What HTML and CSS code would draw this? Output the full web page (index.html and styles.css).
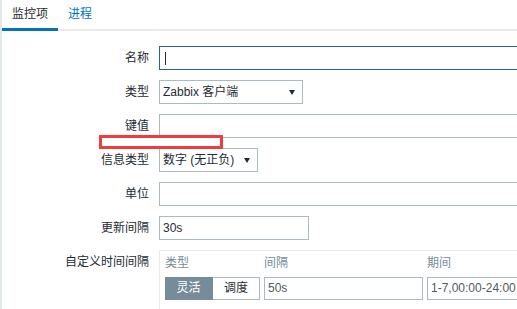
FILE: index.html
```html
<!DOCTYPE html>
<html lang="zh">
<head>
  <meta charset="UTF-8" />
  <title>监控项</title>
  <link rel="stylesheet" href="styles.css">
</head>
<body>
  <ul class="tabs">
    <li class="tab active">监控项</li>
    <li class="tab">进程</li>
  </ul>
  <div class="form">
    <div class="lbl">名称</div>
    <div class="field"><div class="box w-long focus"><span class="caret"></span></div></div>

    <div class="lbl">类型</div>
    <div class="field"><div class="box select w-type"><span>Zabbix 客户端</span><span class="arrow"></span></div></div>

    <div class="lbl">键值</div>
    <div class="field"><div class="box w-long"></div></div>

    <div class="lbl">信息类型</div>
    <div class="field"><div class="box select w-info"><span>数字 (无正负)</span><span class="arrow"></span></div></div>

    <div class="lbl">单位</div>
    <div class="field"><div class="box w-long"></div></div>

    <div class="lbl">更新间隔</div>
    <div class="field"><div class="box w-short">30s</div></div>

    <div class="lbl">自定义时间间隔</div>
    <div class="field">
      <div class="intervals">
        <div class="col-type">
          <div class="head">类型</div>
          <div class="seg">
            <span class="seg-btn on">灵活</span>
            <span class="seg-btn">调度</span>
          </div>
        </div>
        <div class="col-int">
          <div class="head">间隔</div>
          <div class="box small">50s</div>
        </div>
        <div class="col-per">
          <div class="head">期间</div>
          <div class="box small">1-7,00:00-24:00</div>
        </div>
      </div>
    </div>
  </div>
  <!-- annotation box from the screenshot -->
  <div class="mark"></div>
</body>
</html>
```

FILE: styles.css
```css
html, body {
  height: 100%;
}
body {
  margin: 0;
  font-family: "Liberation Sans", "Noto Sans CJK SC", sans-serif;
  font-size: 12px;
  color: #1f2c33;
  background: #fff;
  border-left: 2px solid #e3e8eb;
  overflow: hidden;
  position: relative;
}
.tabs {
  display: flex;
  margin: 0;
  padding: 0;
  list-style: none;
  box-shadow: inset 0 -2px #ebebeb;
}
.tab {
  padding: 0 10px;
  line-height: 28px;
  border-bottom: 3px solid transparent;
  color: #0275b8;
}
.tab.active {
  color: #1f2c33;
  border-bottom-color: #0275b8;
}
.form {
  display: grid;
  grid-template-columns: 147px 1fr;
  column-gap: 10px;
  row-gap: 10px;
  margin-top: 15px;
}
.lbl {
  text-align: right;
  line-height: 24px;
  white-space: nowrap;
}
.field {
  min-width: 0;
}
.box {
  box-sizing: border-box;
  height: 24px;
  line-height: 22px;
  padding: 0 3px;
  border: 1px solid #acbbc2;
  background: #fff;
  white-space: nowrap;
}
.focus {
  border-color: #1f65a6;
}
.caret {
  display: inline-block;
  width: 1px;
  height: 13px;
  margin-left: 2px;
  background: #1f2c33;
  vertical-align: middle;
}
.w-long { width: 453px; }
.w-type { width: 144px; }
.w-info { width: 99px; }
.w-short { width: 150px; }
.select {
  display: flex;
  justify-content: space-between;
  align-items: center;
  padding-right: 7px;
}
.arrow {
  width: 0;
  height: 0;
  border-left: 3px solid transparent;
  border-right: 3px solid transparent;
  border-top: 5px solid #1f2c33;
}
.intervals {
  display: grid;
  grid-template-columns: 95px 159px 160px;
  column-gap: 4px;
  width: 460px;
  height: 80px;
  padding: 3px 5px 0;
  border: 1px solid #ebebeb;
}
.head {
  line-height: 18px;
  margin-bottom: 5px;
  color: #768d99;
}
.seg {
  display: flex;
}
.seg-btn {
  box-sizing: border-box;
  width: 47px;
  height: 23px;
  line-height: 21px;
  text-align: center;
  border: 1px solid #acbbc2;
  border-left: none;
  background: #fff;
}
.seg-btn.on {
  width: 48px;
  background: #768d99;
  border-color: #768d99;
  color: #fff;
}
.small {
  height: 23px;
  line-height: 21px;
  color: #4f5b62;
}
.mark {
  position: absolute;
  left: 97px;
  top: 135px;
  width: 124px;
  height: 14px;
  box-sizing: border-box;
  border: 3px solid #f03c3c;
}
```
